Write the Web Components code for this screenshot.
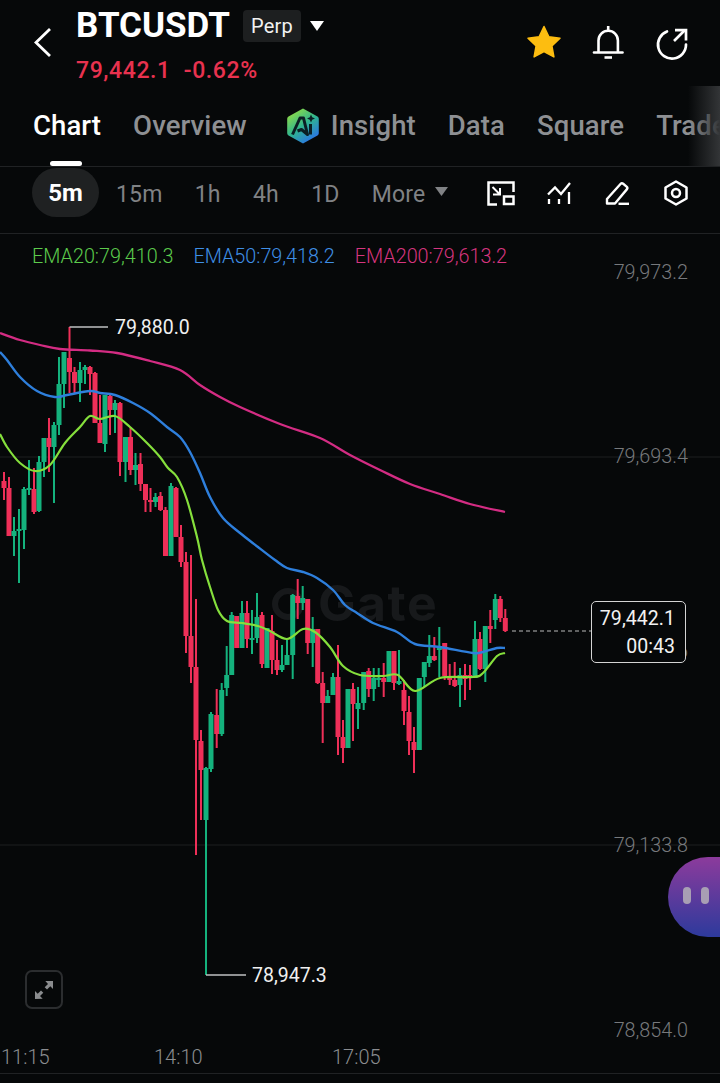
<!DOCTYPE html>
<html lang="en"><head><meta charset="utf-8"><title>BTCUSDT</title>
<style>
html,body{margin:0;padding:0;background:#060809;}
body{width:720px;height:1083px;overflow:hidden;font-family:Roboto,"Liberation Sans",sans-serif;color:#fff;}
</style></head>
<body>
<x-app>
  <x-header symbol="BTCUSDT" kind="Perp" price="79,442.1" change="-0.62%"></x-header>
  <x-tabs></x-tabs>
  <x-intervals></x-intervals>
  <x-chart></x-chart>
</x-app>
<script>
class Base extends HTMLElement{
  render(css,html){const r=this.shadowRoot||this.attachShadow({mode:'open'});r.innerHTML='<style>'+css+'</style>'+html;}
}
class XApp extends Base{connectedCallback(){this.render(
  ':host{display:flex;flex-direction:column;width:720px;height:1083px;background:#060809;position:relative;overflow:hidden}','<slot></slot>');}}
class XHeader extends Base{connectedCallback(){const a=k=>this.getAttribute(k);this.render(`
  :host{display:flex;height:86px;flex:none;position:relative;box-sizing:border-box}
  .back{width:76px;flex:none;display:flex;justify-content:center}
  .back svg{margin:28px 0 0 10px}
  .info{display:flex;flex-direction:column;flex:1}
  .row{display:flex;align-items:center;height:33px;margin-top:9px}
  .sym{font-size:35px;font-weight:700;letter-spacing:0;line-height:33px}
  .chip{margin-left:13px;width:58px;height:32px;background:#1d1f20;border-radius:4px;display:flex;align-items:center;justify-content:center;font-size:20px;color:#f2f2f2;letter-spacing:.2px}
  .tri{margin-left:9px}
  .px{display:flex;gap:13px;margin-top:15px;font-size:23px;font-weight:500;line-height:27px;color:#e8324f;letter-spacing:.6px}
  `,`
  <div class="back"><svg width="18" height="30" viewBox="0 0 18 30"><path d="M16 1 2 14.500 16 28" fill="none" stroke="#fff" stroke-width="2.800"/></svg></div>
  <div class="info">
   <div class="row"><span class="sym">${a('symbol')}</span><span class="chip">${a('kind')}</span>
     <svg class="tri" width="14" height="10" viewBox="0 0 14 10"><path d="M0 0h14L7 10z" fill="#fff"/></svg></div>
   <div class="px"><span>${a('price')}</span><span>${a('change')}</span></div>
  </div>
  <svg style="position:absolute;left:520px;top:20px" width="180" height="44" viewBox="520 20 180 44">
    <path d="M544 26.500l4.900 10.200 11.100 1.500-8.100 7.700 2 11-9.900-5.400-9.900 5.400 2-11-8.100-7.700 11.100-1.500z" fill="#fdbd10" stroke="#fdbd10" stroke-width="1.500" stroke-linejoin="round"/>
    <g fill="none" stroke="#fff" stroke-width="2.600">
      <path d="M598.500 52V40.500a9.700 9.700 0 0 1 19.400 0V52"/>
      <path d="M594 52.500h28.500" stroke-linecap="round"/>
      <path d="M608.200 26v4.500"/>
      <path d="M604.500 57.500h7.500"/>
    </g>
    <g fill="none" stroke="#fff" stroke-width="2.700">
      <path d="M667 31.500a14 14 0 1 0 19 13" stroke-linecap="round"/>
      <path d="M674 41l11-11"/>
      <path d="M675 30.200h11v10.300"/>
    </g>
  </svg>`);}}
class XTabs extends Base{connectedCallback(){this.render(`
  :host{display:flex;height:81px;flex:none;box-sizing:border-box;border-bottom:1px solid #202224;position:relative;overflow:hidden;padding-left:33px;gap:32px;align-items:flex-start;white-space:nowrap}
  span{font-size:27.500px;line-height:32px;margin-top:24px;color:#8e9093;font-weight:500;letter-spacing:.1px;flex:none}
  .on{color:#fff}
  .ai{display:flex;align-items:flex-start;gap:11px;margin-left:7px;flex:none;margin-top:21px}
  .ai span{margin:3px 0 0}
  .bar{position:absolute;left:50px;bottom:0;width:32px;height:5px;background:#fff;border-radius:3px}
  .fade{position:absolute;right:0;top:0;bottom:0;width:32px;background:linear-gradient(90deg,rgba(50,52,54,0),#333537)}
  .ai svg{display:block}
  `,`
  <span class="on">Chart</span>
  <span>Overview</span>
  <div class="ai"><svg width="34" height="38" viewBox="0 0 34 38"><defs><linearGradient id="g" x1=".1" y1=".1" x2=".7" y2="1"><stop offset="0" stop-color="#8fdc45"/><stop offset=".5" stop-color="#2fb58f"/><stop offset="1" stop-color="#2a72ea"/></linearGradient></defs>
    <path d="M17 1.500 31.500 9.500a2.500 2.500 0 0 1 1.300 2.200v14.600a2.500 2.500 0 0 1-1.300 2.200L17 36.500 2.500 28.500a2.500 2.500 0 0 1-1.300-2.200V11.700a2.500 2.500 0 0 1 1.300-2.200z" fill="url(#g)"/>
    <path d="M6.500 27.500 14 11h3.500l4 16.500-6-5-4 1.500" fill="none" stroke="#0b1f24" stroke-width="3" stroke-linejoin="round"/>
    <path d="M24.500 17v10.500" stroke="#0b1f24" stroke-width="3"/>
    <path d="M25 7.500l1.200 2.800 2.800 1.200-2.800 1.200-1.200 2.800-1.200-2.800-2.800-1.200 2.800-1.200z" fill="#0b1f24"/></svg><span>Insight</span></div>
  <span>Data</span><span>Square</span><span>Trade</span>
  <div class="fade"></div><div class="bar"></div>`);}}
class XIntervals extends Base{connectedCallback(){this.render(`
  :host{display:flex;height:67px;flex:none;box-sizing:border-box;border-bottom:1px solid #202224;padding:1px 32px 0 32px;align-items:flex-start;position:relative}
  .pill{width:67px;height:49px;border-radius:25px;background:#1f2122;display:flex;align-items:center;justify-content:center;font-size:24px;font-weight:700;margin-right:17px;flex:none}
  .list{display:flex;gap:32.300px;height:49px;align-items:center;font-size:23px;color:#808285;letter-spacing:.15px;padding-top:4px;box-sizing:border-box}
  .list span{flex:none}
  .more{display:flex;align-items:center;gap:10px}
  .more svg{margin-top:-7px}
  .tools{margin-left:auto;margin-top:12px;display:flex;gap:34px;align-items:center}
  .tools svg:first-child{margin-right:-2px}
  svg{display:block}
  `,`
  <div class="pill">5m</div>
  <div class="list"><span>15m</span><span>1h</span><span>4h</span><span>1D</span>
   <div class="more"><span>More</span><svg width="13" height="9" viewBox="0 0 13 9"><path d="M0 0h13L6.500 9z" fill="#808285"/></svg></div></div>
  <div class="tools">
   <svg width="28" height="25" viewBox="0 0 28 25" fill="none" stroke="#fff" stroke-width="2.500"><path d="M10 23.500H1.500V1.500H26.500V11"/><path d="M5.500 6l7 7M6 13.500h7V7" stroke-width="2"/><rect x="17" y="15.500" width="9.500" height="7.500" /></svg>
   <svg width="24" height="24" viewBox="0 0 24 24" fill="none" stroke="#fff" stroke-width="2.300"><path d="M1 13.500 8 6.500l6 6.500 9-11"/><path d="M2 18v5M12 18v5M22 11v12"/></svg>
   <svg width="25" height="25" viewBox="0 0 25 25" fill="none" stroke="#fff" stroke-width="2.400" stroke-linejoin="round"><path d="M2 18 15.500 3a2 2 0 0 1 2.700-.2l3.400 2.800a2 2 0 0 1 .2 2.800L10 22.500H2z"/><path d="M13.500 22.800H24"/></svg>
   <svg width="24" height="26" viewBox="0 0 24 26" fill="none" stroke="#fff" stroke-width="2.500" stroke-linejoin="round"><path d="M12 1.500l10.500 6v11l-10.500 6-10.500-6v-11z"/><circle cx="12" cy="13" r="4"/></svg>
  </div>`);}}
const CANDLES=[
[4,472,500,481,488,0],[9,477,536,488,536,0],[14,517,556,531,536,1],[19,509,583,529,531,1],[24,487,549,489,530,1],[29,460,495,488,490,1],[34,468,514,489,512,0],[39,456,512,462,511,1],[44,438,477,438,462,1],[49,418,472,438,447,0],[54,422,503,425,447,1],[59,357,435,384,425,1],[64,352,408,352,384,1],[69.500,327,393,358,372,0],[74.500,367,393,372,383,0],[80,362,402,370,383,1],[85,365,384,367,370,1],[90,366,395,367,374,0],[95,372,423,373,423,0],[100,395,443,423,443,0],[105,395,452,395,444,1],[110,395,435,396,410,0],[115,400,433,403,410,1],[120,402,476,403,462,0],[125.500,437,482,437,462,1],[130.500,427,475,437,470,0],[135.500,453,485,465,470,1],[140.500,453,491,464,484,0],[145.500,484,512,484,500,0],[150.500,488,512,500,502,0],[155.500,493,507,497,502,1],[160.500,492,511,496,510,0],[165.500,507,556,510,556,0],[171,483,556,486,556,1],[176,487,537,488,537,0],[181,525,567,537,562,0],[186,552,653,562,636,0],[191,555,683,636,667,0],[196,599,855,667,740,0],[201,730,820,741,770,0],[206,767,975,768,820,1],[211,712,772,714,769,1],[216.700,689,748,715,734,0],[221.700,683,736,690,734,1],[226.700,646,696,675,688,1],[231.700,612,675,615,675,1],[236.700,616,648,616,648,0],[242,601,648,613,648,1],[247,601,648,613,639,0],[252,610,654,638,639,1],[257,593,643,617,638,1],[262,612,668,615,664,0],[267,628,668,628,668,1],[272,615,674,631,660,0],[277,640,675,660,670,0],[282,645,672,665,670,1],[287,640,665,655,665,1],[292.700,594,679,595,655,1],[297.700,579,619,596,603,0],[302.700,586,610,598,603,1],[307.700,599,654,599,643,0],[312.700,617,667,629,643,1],[317.700,629,684,629,683,0],[322.700,672,743,683,703,0],[327.700,690,703,696,703,1],[333,673,695,677,695,1],[338,645,755,677,737,0],[343,720,763,737,748,0],[348,689,748,689,748,1],[353,683,741,689,704,0],[358,687,729,703,709,1],[363.700,672,710,672,703,1],[368.700,668,697,671,689,0],[373.700,668,701,678,689,1],[378.700,668,687,678,679,1],[383.700,663,697,678,682,0],[389,651,682,651,682,1],[394,651,690,651,683,0],[399,650,685,681,684,1],[404,680,725,690,711,0],[409,696,755,712,741,0],[414,727,773,742,750,0],[419.300,678,750,678,750,1],[424.300,662,687,662,677,1],[429.300,635,667,656,663,1],[434.300,637,661,656,660,0],[439.300,627,677,646,650,1],[444.700,643,680,643,676,0],[449.700,664,685,676,680,0],[454.700,662,687,680,686,0],[460,668,707,675,685,1],[465,664,700,675,679,0],[470,665,690,675,678,0],[475,621,678,639,678,1],[480,632,670,639,669,0],[485.300,626,682,626,669,1],[490.300,610,643,626,629,0],[495.300,594,629,599,620,1],[500.300,596,622,599,618,0],[505.300,609,632,618,631,0]];
const EMA200=[[0,333],[20,340],[40,345],[60,349],[90,350.500],[117,353],[150,361],[180,370],[200,385],[220,397],[240,407],[280,424],[320,438],[350,455],[380,470],[410,484],[440,494],[470,504],[505,512]];
const EMA50=[[0,352],[7,360],[20,377],[37,391],[55,397],[67,395],[90,391],[100,393],[115,395],[133,403],[150,413],[167,427],[180,437],[190,452],[200,473],[210,497],[223,518],[240,533],[258,547],[275,560],[287,568],[303,572],[317,578],[333,590],[345,605],[357,613],[373,623],[397,632],[415,644],[440,647],[473,653],[483,652],[497,648],[505,648]];
const EMA20=[[0,434],[7,447],[20,463],[35,471],[50,465],[65,443],[80,427],[90,416],[100,419],[115,416],[130,427],[147,443],[160,457],[168,468],[177,477],[187,500],[197,537],[202,560],[210,587],[218,610],[227,621],[242,623],[258,626],[270,631],[287,639],[303,629],[315,632],[330,647],[343,666],[360,675],[383,676],[398,675],[415,691],[440,678],[473,677],[483,673],[497,656],[505,653]];
function smooth(p){let d='M'+p[0][0]+' '+p[0][1];for(let i=0;i<p.length-1;i++){const a=p[i-1]||p[i],b=p[i],c=p[i+1],e=p[i+2]||c;
  d+=' C'+(b[0]+(c[0]-a[0])/6).toFixed(1)+' '+(b[1]+(c[1]-a[1])/6).toFixed(1)+' '+(c[0]-(e[0]-b[0])/6).toFixed(1)+' '+(c[1]-(e[1]-b[1])/6).toFixed(1)+' '+c[0]+' '+c[1];}return d;}
class XChart extends Base{connectedCallback(){
  const top=234,G='#14b27d',R='#ee2f58';
  const cs=CANDLES.map(([x,a,b,c,d,g])=>{const col=g?G:R;return `<rect x="${x-1}" y="${a}" width="2" height="${b-a}" fill="${col}"/><rect x="${x-2.500}" y="${c}" width="5" height="${Math.max(d-c,2)}" fill="${col}"/>`}).join('');
  const price=[['79,973.2',273],['79,693.4',457],['79,413.6',652],['79,133.8',846],['78,854.0',1031]].map(([t,y])=>`<span class="ax" style="top:${y-top}px">${t}</span>`).join('');
  const times=[['11:15',1],['14:10',154],['17:05',332]].map(([t,x])=>`<span class="t" style="left:${x}px">${t}</span>`).join('');
  this.render(`
  :host{display:block;flex:1;position:relative;border-bottom:1px solid #202224;margin-bottom:9px;overflow:hidden}
  svg.c{position:absolute;left:0;top:0;display:block}
  .legend{position:relative;display:flex;gap:20px;padding:12px 0 0 32px;font-size:19.800px;font-weight:300;line-height:22px}
  .legend .a{color:#5ccb4c}.legend .b{color:#3f8fe6}.legend .c{color:#d6357f}
  .ax{position:absolute;right:32px;transform:translateY(-50%);font-size:19.800px;font-weight:300;color:#77797c;line-height:22px}
  .t{position:absolute;top:${1057-top}px;transform:translateY(-50%);font-size:20px;font-weight:300;color:#8b8d90;line-height:22px}
  .mark{position:absolute;transform:translateY(-50%);font-size:19.500px;font-weight:400;color:#f0f0f0;line-height:22px}
  .wm{position:absolute;left:318px;top:${603-top}px;transform:translateY(-50%);font-size:50px;font-weight:700;color:#17191b;line-height:50px;font-family:Inter,Roboto,sans-serif;letter-spacing:1.500px}
  .box{position:absolute;left:591px;top:${601-top}px;width:95px;height:62px;box-sizing:border-box;border:1px solid #d4d4d4;border-radius:5px;background:#060809;padding:3px 10px 0 0;text-align:right;font-size:19.500px;line-height:28px;color:#f2f2f2;letter-spacing:.05px}
  .expand{position:absolute;left:25px;top:${970-top}px;width:38px;height:39px;box-sizing:border-box;border:2px solid #2b2d2f;border-radius:7px;display:flex;align-items:center;justify-content:center}
  `,`
  <div class="wm">Gate</div>
  <svg class="c" width="720" height="839" viewBox="0 ${top} 720 839">
    <path d="M0 457H720M0 845H720" stroke="#1c1e20" stroke-width="1"/>
    <circle cx="288" cy="604" r="13" fill="none" stroke="#17191b" stroke-width="6"/>
    ${cs}
    <path d="${smooth(EMA200)}" fill="none" stroke="#d32c83" stroke-width="2.300"/>
    <path d="${smooth(EMA50)}" fill="none" stroke="#2e7fdc" stroke-width="2.400"/>
    <path d="${smooth(EMA20)}" fill="none" stroke="#85df3c" stroke-width="2.200"/>
    <path d="M69.500 327H108M206 975H246" stroke="#bfc0c1" stroke-width="1.300" fill="none"/>
    <path d="M512 631H591" stroke="#b9babb" stroke-width="1" stroke-dasharray="4 3" fill="none"/>
  </svg>
  <div class="legend"><span class="a">EMA20:79,410.3</span><span class="b">EMA50:79,418.2</span><span class="c">EMA200:79,613.2</span></div>
  ${price}${times}
  <span class="mark" style="left:115px;top:${328-top}px">79,880.0</span>
  <span class="mark" style="left:252px;top:${976-top}px">78,947.3</span>
  <div class="box">79,442.1<br>00:43</div>
  <div class="expand"><svg width="20" height="20" viewBox="0 0 20 20" fill="#8a8c8e"><path d="M19 1v8l-2.700-2.700-3.300 3.300-2.300-2.300 3.300-3.300L11.300 1zM1 19v-8l2.700 2.700 3.300-3.300 2.300 2.300-3.300 3.300 2.700 2.700z"/></svg></div>
  <x-blob></x-blob>`);}}
class XBlob extends Base{connectedCallback(){this.render(`
  :host{position:absolute;right:0;top:623px;width:52px;height:80px;border-radius:40px 0 0 40px;background:linear-gradient(180deg,#8c3b9c,#2d3a9c);display:flex;gap:10px;padding:30px 0 0 15px;box-sizing:border-box}
  i{display:block;width:8px;height:17px;border-radius:4px;background:#a89fb4}`,'<i></i><i></i>');}}
customElements.define('x-app',XApp);customElements.define('x-header',XHeader);customElements.define('x-tabs',XTabs);customElements.define('x-intervals',XIntervals);customElements.define('x-blob',XBlob);customElements.define('x-chart',XChart);
</script>
</body></html>
